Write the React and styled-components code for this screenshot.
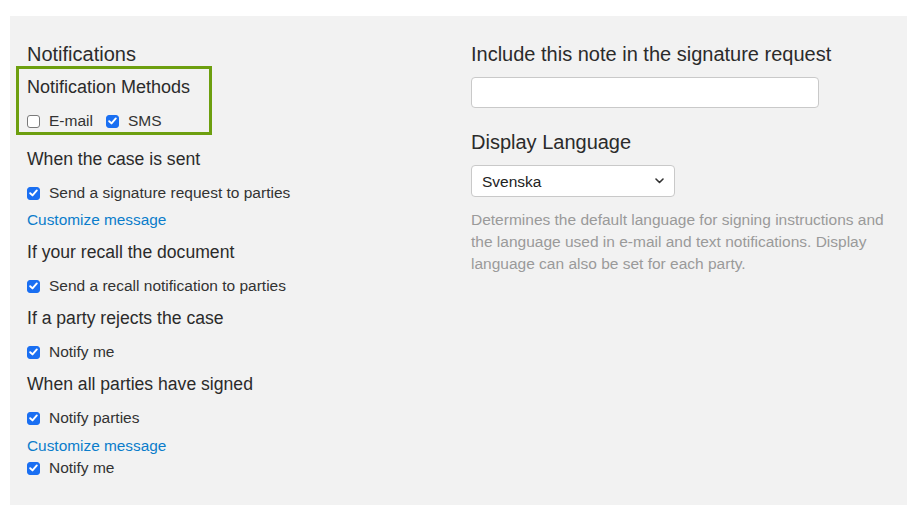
import React from 'react';
import styled, { createGlobalStyle } from 'styled-components';

const GlobalStyle = createGlobalStyle`
  html, body {
    margin: 0;
    padding: 0;
    background: #fff;
  }
  body {
    font-family: "Liberation Sans", Arial, Helvetica, sans-serif;
    color: #333;
  }
`;

const Check = ({ checked, label }) => (
  <Option>
    <Box checked={checked}>
      {checked && (
        <svg width="9" height="8" viewBox="0 0 9 8">
          <path d="M1.2 4.2 L3.5 6.4 L7.8 1.4" fill="none" stroke="#fff" strokeWidth="1.9" strokeLinecap="round" strokeLinejoin="round" />
        </svg>
      )}
    </Box>
    <span>{label}</span>
  </Option>
);

const App = function () {
  return (
    <Page>
      <GlobalStyle />
      <Panel>
        <Column>
          <Title>Notifications</Title>
          <Highlight>
            <SubTitle large>Notification Methods</SubTitle>
            <InlineOptions>
              <Check label="E-mail" />
              <Check checked label="SMS" />
            </InlineOptions>
          </Highlight>

          <Sections>
            <Section>
              <SubTitle>When the case is sent</SubTitle>
              <Check checked label="Send a signature request to parties" />
              <Link href="#" gap={7}>Customize message</Link>
            </Section>
            <Section>
              <SubTitle>If your recall the document</SubTitle>
              <Check checked label="Send a recall notification to parties" />
            </Section>
            <Section>
              <SubTitle>If a party rejects the case</SubTitle>
              <Check checked label="Notify me" />
            </Section>
            <Section>
              <SubTitle>When all parties have signed</SubTitle>
              <Check checked label="Notify parties" />
              <Link href="#" gap={8}>Customize message</Link>
              <Spaced>
                <Check checked label="Notify me" />
              </Spaced>
            </Section>
          </Sections>
        </Column>

        <Column>
          <Title>Include this note in the signature request</Title>
          <NoteInput type="text" />
          <Title spaced>Display Language</Title>
          <SelectWrap>
            <Select defaultValue="sv">
              <option value="sv">Svenska</option>
              <option value="en">English</option>
            </Select>
            <Chevron width="9" height="6" viewBox="0 0 9 6">
              <path d="M1 1 L4.5 4.5 L8 1" fill="none" stroke="#333" strokeWidth="1.6" strokeLinecap="round" strokeLinejoin="round" />
            </Chevron>
          </SelectWrap>
          <Help>
            Determines the default language for signing instructions and the language used in e-mail and text notifications. Display language can also be set for each party.
          </Help>
        </Column>
      </Panel>
    </Page>
  );
};

export default App;

const Page = styled.div`
  width: 920px;
  height: 519px;
  padding: 16px 13px 14px 10px;
  box-sizing: border-box;
`;

const Panel = styled.div`
  background: #f2f2f2;
  display: grid;
  grid-template-columns: 444px 1fr;
  padding: 26px 17px 27px 17px;
  box-sizing: border-box;
  height: 489px;
`;

const Column = styled.div`
  display: flex;
  flex-direction: column;
  align-items: flex-start;
`;

const Title = styled.div`
  font-size: 20px;
  line-height: 24px;
  color: #2b2b2b;
  margin-top: ${(p) => (p.spaced ? '22px' : '0')};
`;

const SubTitle = styled.div`
  font-size: ${(p) => (p.large ? '18px' : '17.6px')};
  line-height: 22px;
  color: #2b2b2b;
`;

const Highlight = styled.div`
  border: 3px solid #6d9f0f;
  width: 196px;
  box-sizing: border-box;
  margin-left: -11px;
  padding: 7px 8px 1px 8px;
  display: flex;
  flex-direction: column;
  gap: 13px;
`;

const InlineOptions = styled.div`
  display: flex;
  gap: 13px;
`;

const Sections = styled.div`
  display: flex;
  flex-direction: column;
  gap: 11px;
  margin-top: 13px;
`;

const Section = styled.div`
  display: flex;
  flex-direction: column;
  align-items: flex-start;

  & > ${SubTitle} {
    margin-bottom: 13px;
  }
`;

const Option = styled.label`
  display: flex;
  align-items: center;
  gap: 9px;
  height: 20px;
  font-size: 15.5px;
  color: #333;
`;

const Box = styled.span`
  width: 13px;
  height: 13px;
  box-sizing: border-box;
  border-radius: 3px;
  display: flex;
  align-items: center;
  justify-content: center;
  background: ${(p) => (p.checked ? '#1a6ff2' : '#fff')};
  border: 1px solid ${(p) => (p.checked ? '#1a6ff2' : '#7a7a7a')};
`;

const Link = styled.a`
  display: block;
  font-size: 15.4px;
  line-height: 20px;
  color: #0b7dcb;
  text-decoration: none;
  margin-top: ${(p) => p.gap}px;
`;

const Spaced = styled.div`
  margin-top: 2px;
`;

const NoteInput = styled.input`
  margin-top: 11px;
  width: 348px;
  height: 31px;
  box-sizing: border-box;
  border: 1px solid #c9c9c9;
  border-radius: 4px;
  background: #fff;
  outline: none;
  font-family: inherit;
  font-size: 15px;
  padding: 0 10px;
`;

const SelectWrap = styled.div`
  position: relative;
  margin-top: 11px;
`;

const Select = styled.select`
  appearance: none;
  width: 204px;
  height: 32px;
  box-sizing: border-box;
  border: 1px solid #c9c9c9;
  border-radius: 4px;
  background: #fff;
  font-family: "Liberation Sans", Arial, sans-serif;
  font-size: 15.5px;
  color: #222;
  padding: 0 24px 0 10px;
  outline: none;
`;

const Chevron = styled.svg`
  position: absolute;
  right: 11px;
  top: 13px;
  pointer-events: none;
`;

const Help = styled.p`
  margin: 12px 0 0 0;
  font-size: 15.5px;
  line-height: 22px;
  color: #9a9a9a;
  max-width: 425px;
`;
